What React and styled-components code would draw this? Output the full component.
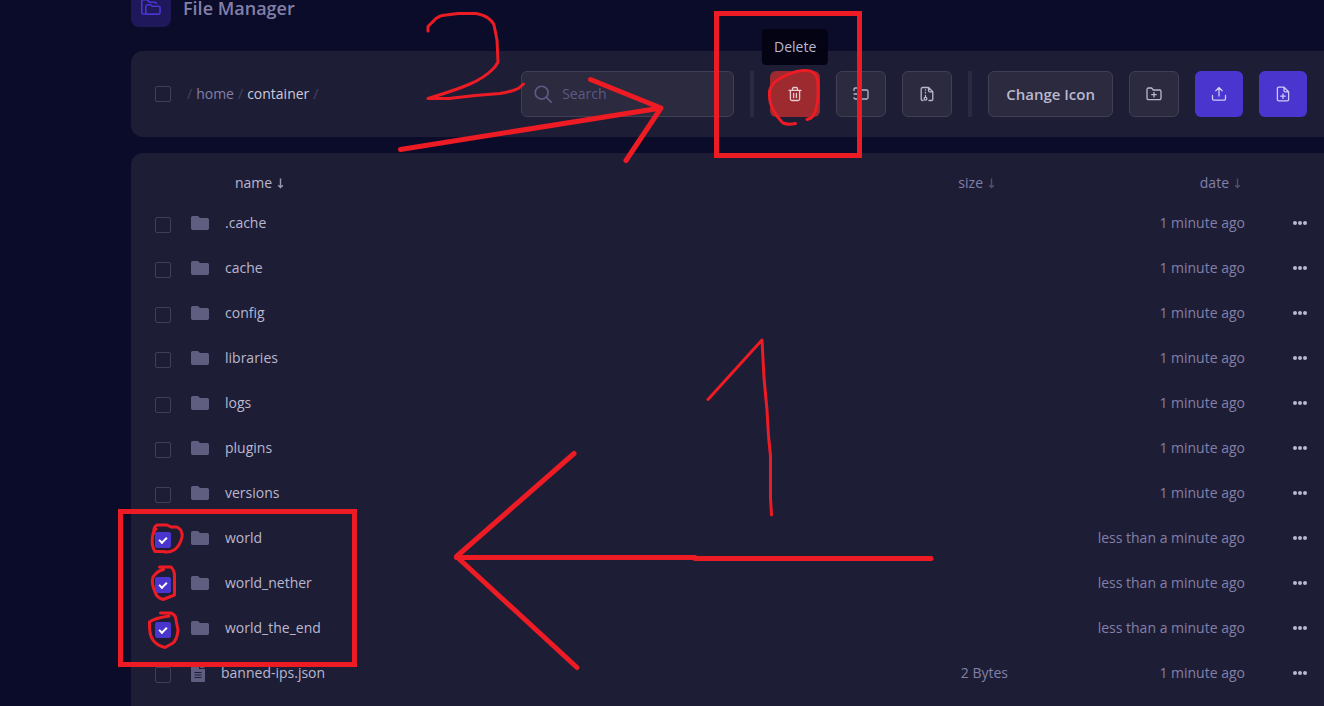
import React, { useState } from 'react'
import styled, { createGlobalStyle, css } from 'styled-components'

const GlobalStyle = createGlobalStyle`
    *, *::after {
        box-sizing: border-box;
    }
    body {
        margin: 0;
        background: #0b0c29;
        color: #b9b8cf;
        font-family: "Open Sans", "Noto Sans", sans-serif;
        font-size: 14px;
        line-height: 20px;
    }
    button, input {
        font: inherit;
        color: inherit;
    }
`

const Page = styled.div`
    position: relative;
    display: flex;
    flex-direction: column;
    height: 100vh;
    padding-left: 131px;
    overflow: hidden;
`

const Header = styled.header`
    display: flex;
    align-items: flex-end;
    flex-shrink: 0;
    gap: 12px;
    height: 27px;
    margin-bottom: 24px;
`

const HeaderIcon = styled.div`
    display: flex;
    align-items: center;
    justify-content: center;
    flex-shrink: 0;
    width: 40px;
    height: 40px;
    border-radius: 8px;
    background: #1f195b;
    color: #4a35cf;
`

const Title = styled.h1`
    margin: 0;
    padding-bottom: 11px;
    font-size: 18px;
    font-weight: 600;
    line-height: 16px;
    color: #8280a8;
`

const Toolbar = styled.div`
    display: flex;
    align-items: center;
    flex-shrink: 0;
    gap: 16px;
    margin-bottom: 16px;
    padding: 20px 17px 20px 24px;
    border-radius: 12px 0 0 12px;
    background: #1e1d36;
`

const Checkbox = styled.input.attrs({ type: 'checkbox' })`
    appearance: none;
    display: flex;
    align-items: center;
    justify-content: center;
    flex-shrink: 0;
    width: 16px;
    height: 16px;
    margin: 0;
    border: 1px solid #403f59;
    border-radius: 2px;
    cursor: pointer;
    &:checked {
        border-color: #4a35cf;
        background: #4a35cf;
    }
    &:checked::after {
        content: '';
        width: 8px;
        height: 5px;
        margin-top: -2px;
        border: solid #fff;
        border-width: 0 0 2px 2px;
        transform: rotate(-45deg);
    }
`

const Breadcrumbs = styled.nav`
    display: flex;
    flex: 1;
    gap: 4px;
    color: #45435f;
`

const Crumb = styled.a`
    color: ${({ $current }) => ($current ? '#cccbdc' : '#8280a8')};
    text-decoration: none;
`

const SearchBox = styled.label`
    display: flex;
    align-items: center;
    flex: 0 1 213px;
    gap: 10px;
    min-width: 0;
    height: 46px;
    padding: 0 12px;
    border: 1px solid #403f54;
    border-radius: 6px;
    background: #2b2a3e;
    color: #5d5a85;
    svg {
        flex-shrink: 0;
    }
`

const SearchInput = styled.input`
    flex: 1;
    width: 100%;
    min-width: 0;
    padding: 0;
    border: 0;
    outline: 0;
    background: none;
    &::placeholder {
        color: #5d5a85;
        opacity: 1;
    }
`

const Divider = styled.div`
    flex-shrink: 0;
    width: 4px;
    height: 46px;
    background: #2b2a3e;
`

const variants = {
    plain: css`
        width: 50px;
        border: 1px solid #403f54;
        background: #2b2a3e;
    `,
    danger: css`
        width: 50px;
        background: #9c2a2e;
        color: #e6cbd2;
    `,
    primary: css`
        width: 48px;
        background: #4a35cf;
        color: #cfcaf3;
    `,
    text: css`
        padding: 0 17px;
        border: 1px solid #403f54;
        background: #2b2a3e;
        font-size: 15px;
        font-weight: 600;
        white-space: nowrap;
    `,
}

const Button = styled.button`
    position: relative;
    display: flex;
    align-items: center;
    justify-content: center;
    flex-shrink: 0;
    height: 46px;
    padding: 0;
    border: 0;
    border-radius: 6px;
    cursor: pointer;
    ${({ $variant }) => variants[$variant || 'plain']}
`

const Tooltip = styled.span`
    position: absolute;
    bottom: calc(100% + 6px);
    left: 50%;
    padding: 8px 12px;
    border-radius: 4px;
    background: #030314;
    color: #b9b8cf;
    transform: translateX(-50%);
`

const Panel = styled.main`
    flex: 1;
    padding-top: 13px;
    border-radius: 12px 0 0 0;
    background: #1e1d36;
`

const FileTable = styled.table`
    width: 100%;
    border-collapse: collapse;
    table-layout: fixed;
`

const HeadCell = styled.th`
    width: ${({ $width }) => $width};
    height: 34px;
    padding: 0 ${({ $right }) => $right || 0}px 0 ${({ $left }) => $left || 0}px;
    font-weight: 400;
    text-align: ${({ $align }) => $align || 'left'};
`

const SortButton = styled.button`
    display: inline-flex;
    align-items: center;
    gap: 5px;
    padding: 0;
    border: 0;
    background: none;
    color: ${({ $active }) => ($active ? '#b9b8cf' : '#8280a8')};
    cursor: pointer;
    svg {
        opacity: ${({ $active }) => ($active ? 0.8 : 0.5)};
    }
`

const Cell = styled.td`
    height: 45px;
    padding: 0;
    text-align: ${({ $align }) => $align || 'left'};
    color: #8280a8;
    white-space: nowrap;
`

const CheckCell = styled(Cell)`
    padding: 5px 0 0 24px;
`

const MenuCell = styled(Cell)`
    padding-right: 17px;
`

const FileLink = styled.a`
    display: flex;
    align-items: center;
    gap: 16px;
    color: #b9b8cf;
    text-decoration: none;
    svg {
        flex-shrink: 0;
        color: #5f5d80;
    }
`

const MenuButton = styled.button`
    display: flex;
    margin-left: auto;
    padding: 0;
    border: 0;
    background: none;
    color: #b9b8cf;
    cursor: pointer;
`

const Markup = styled.svg`
    position: absolute;
    top: 0;
    left: 0;
    pointer-events: none;
    fill: none;
    stroke: #ed1c24;
    stroke-width: 3px;
    stroke-linecap: round;
    stroke-linejoin: round;
`

const Thick = styled.g`
    stroke-width: 5px;
    rect {
        stroke-linejoin: miter;
    }
`

const LineIcon = ({ size = 16, width = 1.3, children }) => (
    <svg
        width={size}
        height={size}
        viewBox="0 0 16 16"
        fill="none"
        stroke="currentColor"
        strokeWidth={width}
        strokeLinecap="round"
        strokeLinejoin="round"
        aria-hidden="true"
    >
        {children}
    </svg>
)

const FoldersIcon = () => (
    <svg width="22" height="20" viewBox="0 0 22 20" fill="none" stroke="currentColor" strokeWidth="1.6" strokeLinejoin="round" aria-hidden="true">
        <path d="M5 17H3.5A1.8 1.8 0 0 1 1.8 15.2V4.6A1.8 1.8 0 0 1 3.5 2.8H7l2.5 2.4h5.2a1.8 1.8 0 0 1 1.8 1.8" />
        <path d="M5.8 9.5A1.8 1.8 0 0 1 7.6 7.7h3l1.5 1.5h6.2A1.8 1.8 0 0 1 20.1 11v4.3a1.8 1.8 0 0 1-1.8 1.8H5.8z" />
    </svg>
)

const TrashIcon = () => (
    <LineIcon>
        <path d="M2 4.3h12M5.5 4V2.7a1.2 1.2 0 0 1 1.2-1.2h2.6a1.2 1.2 0 0 1 1.2 1.2V4M3.4 4.5v8.5a1.5 1.5 0 0 0 1.5 1.5h6.2a1.5 1.5 0 0 0 1.5-1.5V4.5M6.6 7.5v4M9.4 7.5v4" />
    </LineIcon>
)

const MoveIcon = () => (
    <LineIcon>
        <path d="M1 4.5V3.2A1.2 1.2 0 0 1 2.2 2H5l2 2h6.6A1.4 1.4 0 0 1 15 5.4v6.2a1.4 1.4 0 0 1-1.4 1.4H2.4A1.4 1.4 0 0 1 1 11.6M1 8h6.5M5.5 6l2 2-2 2" />
    </LineIcon>
)

const ArchiveIcon = () => (
    <LineIcon>
        <path d="M4 14.5H3.5A1.3 1.3 0 0 1 2.2 13.2V2.8a1.3 1.3 0 0 1 1.3-1.3H9.5L13.8 5.8v7.4a1.3 1.3 0 0 1-1.3 1.3H10M9.5 1.5v3a1.3 1.3 0 0 0 1.3 1.3h3" />
        <path d="M6.5 3.8v0.4M6.5 6.5v0.4M6.5 9.3v1.6" />
        <circle cx="6.5" cy="12.8" r="1.4" />
    </LineIcon>
)

const FolderPlusIcon = () => (
    <LineIcon>
        <path d="M2.3 2H5.6l1.6 2h6.4A1.4 1.4 0 0 1 15 5.4v6.8a1.4 1.4 0 0 1-1.4 1.4H2.4A1.4 1.4 0 0 1 1 12.2V3.3A1.3 1.3 0 0 1 2.3 2zM8 6.5v4.4M5.8 8.7h4.4" />
    </LineIcon>
)

const UploadIcon = () => (
    <LineIcon>
        <path d="M8 10V1.5M4.8 4.7L8 1.5l3.2 3.2M1.5 9.5v3.3a1.3 1.3 0 0 0 1.3 1.3h10.4a1.3 1.3 0 0 0 1.3-1.3V9.5" />
    </LineIcon>
)

const FilePlusIcon = () => (
    <LineIcon>
        <path d="M9 1.2H3.7a1.3 1.3 0 0 0-1.3 1.3v11a1.3 1.3 0 0 0 1.3 1.3h8.6a1.3 1.3 0 0 0 1.3-1.3V5.8zM9 1.2v3.3a1.3 1.3 0 0 0 1.3 1.3h3.3M8 8v4.4M5.8 10.2h4.4" />
    </LineIcon>
)

const SearchIcon = () => (
    <LineIcon size={18} width={1.5}>
        <circle cx="6.8" cy="6.8" r="5.7" />
        <path d="M11 11l4.2 4.2" />
    </LineIcon>
)

const ArrowIcon = () => (
    <svg width="7" height="11" viewBox="0 0 7 11" fill="none" stroke="currentColor" strokeWidth="1.4" aria-hidden="true">
        <path d="M3.5 0.5v9M1.2 7.3l2.3 2.3L5.8 7.3" />
    </svg>
)

const FolderIcon = () => (
    <svg width="18" height="14" viewBox="0 0 18 14" fill="currentColor" aria-hidden="true">
        <path d="M0 1.7A1.7 1.7 0 0 1 1.7 0H7l2 2h7.3A1.7 1.7 0 0 1 18 3.7v8.6a1.7 1.7 0 0 1-1.7 1.7H1.7A1.7 1.7 0 0 1 0 12.3z" />
    </svg>
)

const FileIcon = () => (
    <svg width="14" height="18" viewBox="0 0 14 18" aria-hidden="true">
        <path d="M1 0H8v5h6v12a1 1 0 0 1-1 1H1a1 1 0 0 1-1-1V1a1 1 0 0 1 1-1zM9.2 0L14 4H9.2z" fill="currentColor" />
        <path d="M3.5 8.5h7M3.5 11h7M3.5 13.5h7" stroke="#1e1d36" />
    </svg>
)

const DotsIcon = () => (
    <svg width="14" height="4" viewBox="0 0 14 4" fill="currentColor" aria-hidden="true">
        <circle cx="2" cy="2" r="2" />
        <circle cx="7" cy="2" r="2" />
        <circle cx="12" cy="2" r="2" />
    </svg>
)

const files = [
    { name: '.cache', date: '1 minute ago' },
    { name: 'cache', date: '1 minute ago' },
    { name: 'config', date: '1 minute ago' },
    { name: 'libraries', date: '1 minute ago' },
    { name: 'logs', date: '1 minute ago' },
    { name: 'plugins', date: '1 minute ago' },
    { name: 'versions', date: '1 minute ago' },
    { name: 'world', date: 'less than a minute ago' },
    { name: 'world_nether', date: 'less than a minute ago' },
    { name: 'world_the_end', date: 'less than a minute ago' },
    { name: 'banned-ips.json', date: '1 minute ago', size: '2 Bytes', isFile: true },
]

const FileRow = ({ file, checked, onToggle }) => (
    <tr>
        <CheckCell>
            <Checkbox checked={checked} onChange={onToggle} aria-label={file.name} />
        </CheckCell>
        <Cell>
            <FileLink href="#">
                {file.isFile ? <FileIcon /> : <FolderIcon />}
                {file.name}
            </FileLink>
        </Cell>
        <Cell $align="right">{file.size}</Cell>
        <Cell $align="right">{file.date}</Cell>
        <MenuCell>
            <MenuButton aria-label="More"><DotsIcon /></MenuButton>
        </MenuCell>
    </tr>
)

// hand drawn steps: 1 = tick the world folders, 2 = delete them
const Annotations = () => (
    <Markup width="1324" height="706" viewBox="0 0 1324 706" aria-hidden="true">
        <Thick>
            <rect x="716.5" y="13.5" width="143" height="142" />
            <rect x="120.5" y="511.5" width="234" height="153" />
            <path d="M400.5 149.5L661 108M590.5 79.5L661 108L626 160.5" />
            <path d="M931 558.5H695M695 557.5H456.5M574 453.5L456.5 556.5L577 667.5" />
        </Thick>
        <path d="M428 31V26.5L436 18.5Q441 15 446 15L458 13.5H476Q484 15 488 18Q493 22 494 25L497 40L498 62Q496 66 493 69Q484 78 470 84Q456 90 428 98.5H449L475 95.5L500 93.5Q514 91 519 88L523.5 84" />
        <path d="M708 399.5L762 340L764 378L767 410L768.5 436L770.5 456V498L771.5 515" />
        <path d="M795.5 123.5Q788 125 783 123Q775 115 771.5 106Q769 100 769.5 91Q771 84 779 79Q790 72 803 70.5Q811 70 814 73Q818 77 818 84V98L816.5 107Q815 114 811 118L807 119.5" />
        <path d="M154 533Q153 527 157 525H167L171 527H177Q183 530 182 537Q180 546 174 550Q169 553 163 551.5H155Q151 545 152.5 537Q153 531 156 529" />
        <path d="M159.5 567H171Q175 571 174.5 577V595L163 599.5Q157 598 155 592Q151 583 153 577Q157 571 163.5 569.5" />
        <path d="M160.5 613H171Q176 615 176 620L178 630Q177 640 173 643L165 647.5Q156 645 153 640Q149 635 149.5 622Q155 618 169 616" />
    </Markup>
)

const App = () => {
    const [selected, setSelected] = useState(['world', 'world_nether', 'world_the_end'])

    const toggle = (name) =>
        setSelected((prev) => (prev.includes(name) ? prev.filter((n) => n !== name) : [...prev, name]))

    return (
        <>
            <GlobalStyle />
            <Page>
                <Header>
                    <HeaderIcon><FoldersIcon /></HeaderIcon>
                    <Title>File Manager</Title>
                </Header>
                <Toolbar>
                    <Checkbox aria-label="Select all" />
                    <Breadcrumbs aria-label="Path">
                        <span>/</span>
                        <Crumb href="#">home</Crumb>
                        <span>/</span>
                        <Crumb href="#" $current>container</Crumb>
                        <span>/</span>
                    </Breadcrumbs>
                    <SearchBox>
                        <SearchIcon />
                        <SearchInput type="text" placeholder="Search" aria-label="Search" />
                    </SearchBox>
                    <Divider />
                    <Button $variant="danger">
                        <TrashIcon />
                        <Tooltip>Delete</Tooltip>
                    </Button>
                    <Button aria-label="Move"><MoveIcon /></Button>
                    <Button aria-label="Archive"><ArchiveIcon /></Button>
                    <Divider />
                    <Button $variant="text">Change Icon</Button>
                    <Button aria-label="New folder"><FolderPlusIcon /></Button>
                    <Button $variant="primary" aria-label="Upload"><UploadIcon /></Button>
                    <Button $variant="primary" aria-label="New file"><FilePlusIcon /></Button>
                </Toolbar>
                <Panel>
                    <FileTable>
                        <thead>
                            <tr>
                                <HeadCell $width="60px" />
                                <HeadCell $left={44}>
                                    <SortButton $active>name <ArrowIcon /></SortButton>
                                </HeadCell>
                                <HeadCell $width="100px" $right={13} $align="right">
                                    <SortButton>size <ArrowIcon /></SortButton>
                                </HeadCell>
                                <HeadCell $width="237px" $right={4} $align="right">
                                    <SortButton>date <ArrowIcon /></SortButton>
                                </HeadCell>
                                <HeadCell $width="79px" />
                            </tr>
                        </thead>
                        <tbody>
                            {files.map((file) => (
                                <FileRow
                                    key={file.name}
                                    file={file}
                                    checked={selected.includes(file.name)}
                                    onToggle={() => toggle(file.name)}
                                />
                            ))}
                        </tbody>
                    </FileTable>
                </Panel>
                <Annotations />
            </Page>
        </>
    )
}

export default App
